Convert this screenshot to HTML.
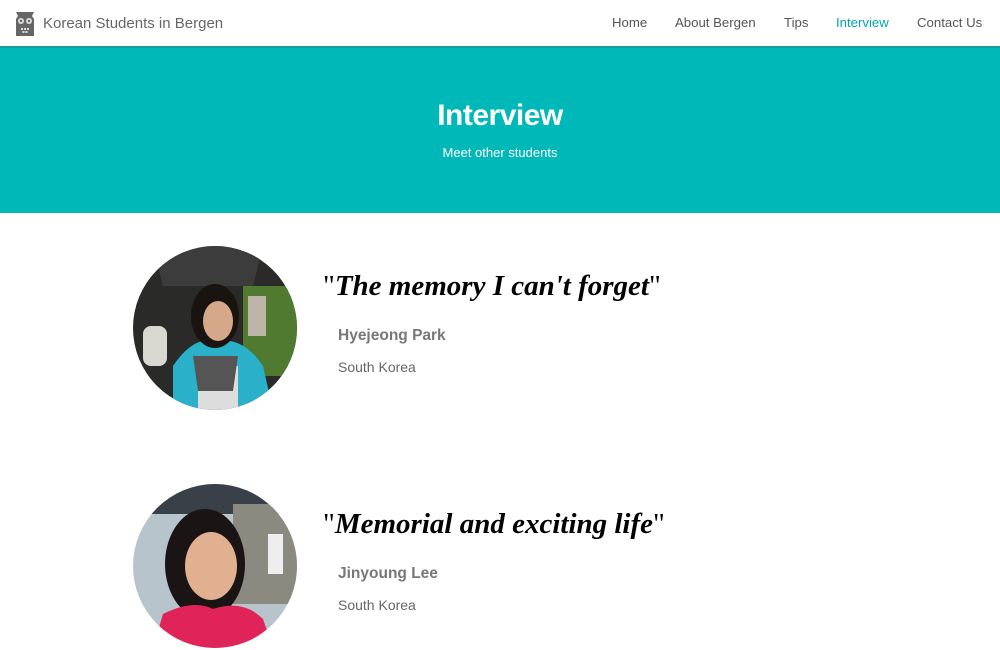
<!DOCTYPE html>
<html><head><meta charset="utf-8"><style>
*{margin:0;padding:0;box-sizing:border-box}
body{width:1000px;height:650px;overflow:hidden;background:#fff;font-family:"Liberation Sans",sans-serif;position:relative}
.hdr{position:absolute;left:0;top:0;width:1000px;height:48px;border-bottom:2px solid #1a9e9e;background:#fff}
.logo{position:absolute;left:43px;top:15px;font-size:15px;color:#666}
.nav a{position:absolute;top:15px;font-size:13.2px;color:#555;text-decoration:none}
.hero{position:absolute;left:0;top:48px;width:1000px;height:165px;background:#00b8b8;color:#fff;text-align:center}
.hero h1{position:absolute;width:1000px;top:51px;font-size:30px;font-weight:bold;letter-spacing:-0.5px}
.hero p{position:absolute;width:1000px;top:97px;font-size:13px}
.q{position:absolute;left:323px;font-family:"Liberation Serif",serif;font-size:29px;color:#000}
.q i{font-weight:bold}
.nm{position:absolute;left:338px;font-size:15.5px;font-weight:bold;color:#777}
.ct{position:absolute;left:338px;font-size:14px;color:#666}
svg.p{position:absolute;left:133px;width:164px;height:164px}
</style></head><body>
<div class="hdr">
<svg style="position:absolute;left:15px;top:10px" width="20" height="28" viewBox="0 0 20 28"><path d="M1 2 L19 2 L17 6 L19 9 L19 26 L1 26 L1 9 L3 6 Z" fill="#666"/><circle cx="6" cy="11" r="3" fill="#ddd"/><circle cx="14" cy="11" r="3" fill="#ddd"/><circle cx="6" cy="11" r="1.2" fill="#666"/><circle cx="14" cy="11" r="1.2" fill="#666"/><rect x="6" y="18" width="2" height="2" fill="#ddd"/><rect x="9" y="18" width="2" height="2" fill="#ddd"/><rect x="12" y="18" width="2" height="2" fill="#ddd"/><rect x="7.5" y="21" width="2" height="2" fill="#ddd"/><rect x="10.5" y="21" width="2" height="2" fill="#ddd"/></svg>
<div class="logo">Korean Students in Bergen</div>
<div class="nav"><a style="left:612px">Home</a><a style="left:675px">About Bergen</a><a style="left:784px">Tips</a><a style="left:836px;color:#00a8a8">Interview</a><a style="left:917px">Contact Us</a></div>
</div>
<div class="hero"><h1>Interview</h1><p>Meet other students</p></div>

<svg class="p" style="top:246px" viewBox="0 0 164 164"><defs><clipPath id="c1"><circle cx="82" cy="82" r="82"/></clipPath></defs><g clip-path="url(#c1)">
<rect width="164" height="164" fill="#2a2a28"/><rect x="110" y="40" width="54" height="90" fill="#4f7a30"/><path d="M20 0 L130 0 L120 40 L30 40Z" fill="#3c3c3c"/><rect x="10" y="80" width="24" height="40" rx="8" fill="#d8d8d0"/><rect x="115" y="50" width="18" height="40" fill="#bdb5a8"/>
<path d="M40 164 L40 120 Q60 90 82 95 Q110 90 130 120 L140 164Z" fill="#2ab0c8"/><rect x="65" y="120" width="40" height="44" fill="#ddd"/><path d="M60 110 L105 110 L100 145 L65 145Z" fill="#555"/>
<ellipse cx="82" cy="70" rx="24" ry="32" fill="#1a1410"/><ellipse cx="85" cy="75" rx="15" ry="20" fill="#d6a88a"/></g></svg>
<div class="q" style="top:270px">"<i>The memory I can't forget</i>"</div>
<div class="nm" style="top:327px">Hyejeong Park</div>
<div class="ct" style="top:359px">South Korea</div>

<svg class="p" style="top:484px" viewBox="0 0 164 164"><defs><clipPath id="c2"><circle cx="82" cy="82" r="82"/></clipPath></defs><g clip-path="url(#c2)">
<rect width="164" height="164" fill="#b8c4cc"/><rect x="0" y="0" width="164" height="30" fill="#3a4048"/><rect x="100" y="20" width="64" height="100" fill="#8a8a80"/><rect x="135" y="50" width="15" height="40" fill="#eee"/>
<ellipse cx="72" cy="80" rx="40" ry="55" fill="#1a1414"/><ellipse cx="78" cy="82" rx="26" ry="34" fill="#e0b090"/><path d="M50 60 Q78 30 105 55 L100 45 Q78 20 50 45Z" fill="#1a1414"/>
<path d="M20 164 L30 130 Q60 115 80 125 Q110 115 130 135 L140 164Z" fill="#e0245a"/></g></svg>
<div class="q" style="top:508px">"<i>Memorial and exciting life</i>"</div>
<div class="nm" style="top:565px">Jinyoung Lee</div>
<div class="ct" style="top:597px">South Korea</div>
</body></html>
